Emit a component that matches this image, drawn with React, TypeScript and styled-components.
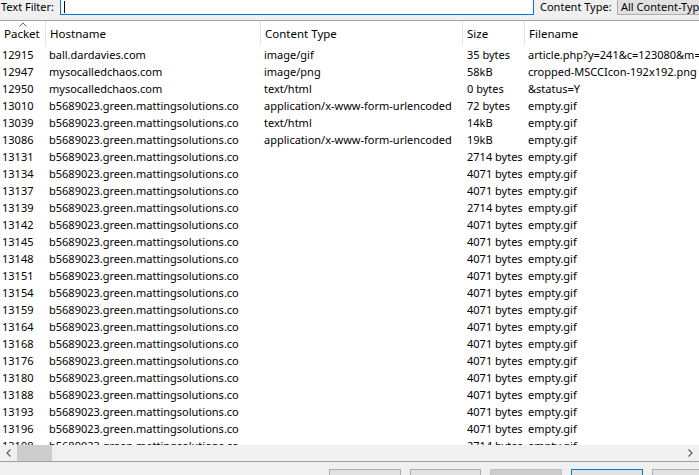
import React from "react";
import styled, { createGlobalStyle } from "styled-components";

const Global = createGlobalStyle`
  html, body { margin: 0; padding: 0; background: #f0f0f0; }
  body { font-family: "Noto Sans", "Open Sans", sans-serif; font-size: 11px; color: #000; }
`;

const Frame = styled.div`
  width: 699px;
  height: 475px;
  overflow: hidden;
  display: flex;
  flex-direction: column;
  background: #f0f0f0;
`;

const TopBar = styled.div`
  height: 20px;
  display: flex;
  align-items: flex-start;
  border-bottom: 1px solid #a0a0a0;
  box-sizing: border-box;
  height: 21px;
`;

const Label = styled.span<{ $w: number }>`
  width: ${(p) => p.$w}px;
  flex: none;
  line-height: 14px;
  padding-left: 1px;
  white-space: nowrap;
`;

const TextInput = styled.div`
  width: 474px;
  height: 16px;
  margin-top: -1px;
  box-sizing: border-box;
  border: 1px solid #0078d7;
  background: #fff;
  margin-right: 5px;
  flex: none;
  position: relative;
`;

const Caret = styled.span`
  position: absolute;
  left: 3px;
  top: 1px;
  width: 1px;
  height: 12px;
  background: #000;
`;

const Combo = styled.div`
  flex: none;
  width: 100px;
  height: 16px;
  margin-top: -1px;
  box-sizing: border-box;
  border: 1px solid #adadad;
  background: #e1e1e1;
  padding-left: 3px;
  line-height: 14px;
  white-space: nowrap;
  overflow: hidden;
`;

const ListArea = styled.div`
  flex: 1;
  background: #fff;
  overflow: hidden;
  display: flex;
  flex-direction: column;
  min-height: 0;
`;

const cols = "46px 215px 202px 62px 220px";

const HeaderRow = styled.div`
  display: grid;
  grid-template-columns: ${cols};
  height: 25px;
  flex: none;
`;

const HeaderCell = styled.div`
  position: relative;
  padding-left: 4px;
  padding-top: 5px;
  line-height: 15px;
  font-size: 11.5px;
  border-right: 1px solid #e5e5e5;
  white-space: nowrap;
`;

const SortArrow = styled.svg`
  position: absolute;
  left: 19px;
  top: 1px;
`;

const Rows = styled.div`
  flex: 1;
  overflow: hidden;
  min-height: 0;
`;

const Row = styled.div`
  display: grid;
  grid-template-columns: ${cols};
  height: 17px;
  line-height: 17px;
`;

const Cell = styled.div<{ $pad?: number }>`
  padding-left: ${(p) => p.$pad ?? 3}px;
  white-space: nowrap;
  overflow: hidden;
`;

const HScroll = styled.div`
  flex: none;
  height: 16px;
  display: flex;
  align-items: center;
  background: #f0f0f0;
  position: relative;
`;

const ArrowBtn = styled.div`
  width: 17px;
  height: 16px;
  display: flex;
  align-items: center;
  justify-content: center;
  flex: none;
`;

const Thumb = styled.div`
  width: 35px;
  height: 16px;
  background: #cdcdcd;
  flex: none;
`;

const Spacer = styled.div`
  flex: 1;
`;

const BottomBar = styled.div`
  flex: none;
  height: 13px;
  border-top: 1px solid #a0a0a0;
  display: flex;
  align-items: flex-start;
  padding-left: 329px;
  gap: 9px;
  padding-top: 7px;
  box-sizing: border-box;
  height: 14px;
`;

const Button = styled.div<{ $w: number; $kind?: "dim" | "focus" }>`
  flex: none;
  width: ${(p) => p.$w}px;
  height: 20px;
  box-sizing: border-box;
  border: 1px solid ${(p) => (p.$kind === "focus" ? "#0078d7" : p.$kind === "dim" ? "#bfbfbf" : "#adadad")};
  background: ${(p) => (p.$kind === "dim" ? "#cccccc" : "#e1e1e1")};
`;

type R = [string, string, string, string, string];

const rows: R[] = [
  ["12915", "ball.dardavies.com", "image/gif", "35 bytes", "article.php?y=241&c=123080&m=1"],
  ["12947", "mysocalledchaos.com", "image/png", "58kB", "cropped-MSCCIcon-192x192.png"],
  ["12950", "mysocalledchaos.com", "text/html", "0 bytes", "&status=Y"],
  ["13010", "b5689023.green.mattingsolutions.co", "application/x-www-form-urlencoded", "72 bytes", "empty.gif"],
  ["13039", "b5689023.green.mattingsolutions.co", "text/html", "14kB", "empty.gif"],
  ["13086", "b5689023.green.mattingsolutions.co", "application/x-www-form-urlencoded", "19kB", "empty.gif"],
];
const rest: [string, string][] = [
  ["13131", "2714"], ["13134", "4071"], ["13137", "4071"], ["13139", "2714"], ["13142", "4071"],
  ["13145", "4071"], ["13148", "4071"], ["13151", "4071"], ["13154", "4071"], ["13159", "4071"],
  ["13164", "4071"], ["13168", "4071"], ["13176", "4071"], ["13180", "4071"], ["13188", "4071"],
  ["13193", "4071"], ["13196", "4071"], ["13198", "2714"],
];
rest.forEach(([p, s]) => rows.push([p, "b5689023.green.mattingsolutions.co", "", `${s} bytes`, "empty.gif"]));

export default function App() {
  return (
    <Frame>
      <Global />
      <TopBar>
        <Label $w={59}>Text Filter:</Label>
        <TextInput>
          <Caret />
        </TextInput>
        <Label $w={77}>Content Type:</Label>
        <Combo>All Content-Types</Combo>
      </TopBar>
      <ListArea>
        <HeaderRow>
          <HeaderCell>
            <SortArrow width="8" height="5" viewBox="0 0 8 5">
              <path d="M0.5 4.5 L4 1 L7.5 4.5" fill="none" stroke="#666" strokeWidth="1" />
            </SortArrow>
            Packet
          </HeaderCell>
          <HeaderCell>Hostname</HeaderCell>
          <HeaderCell>Content Type</HeaderCell>
          <HeaderCell>Size</HeaderCell>
          <HeaderCell>Filename</HeaderCell>
        </HeaderRow>
        <Rows>
          {rows.map((r) => (
            <Row key={r[0]}>
              <Cell $pad={2}>{r[0]}</Cell>
              <Cell>{r[1]}</Cell>
              <Cell>{r[2]}</Cell>
              <Cell $pad={4}>{r[3]}</Cell>
              <Cell>{r[4]}</Cell>
            </Row>
          ))}
        </Rows>
        <HScroll>
          <ArrowBtn>
            <svg width="5" height="8" viewBox="0 0 5 8">
              <path d="M4.5 0.5 L1 4 L4.5 7.5" fill="none" stroke="#606060" strokeWidth="1.2" />
            </svg>
          </ArrowBtn>
          <Thumb />
          <Spacer />
          <ArrowBtn>
            <svg width="5" height="8" viewBox="0 0 5 8">
              <path d="M0.5 0.5 L4 4 L0.5 7.5" fill="none" stroke="#606060" strokeWidth="1.2" />
            </svg>
          </ArrowBtn>
        </HScroll>
      </ListArea>
      <BottomBar>
        <Button $w={72} />
        <Button $w={71} />
        <Button $w={72} $kind="dim" />
        <Button $w={72} $kind="focus" />
        <Button $w={72} />
      </BottomBar>
    </Frame>
  );
}
